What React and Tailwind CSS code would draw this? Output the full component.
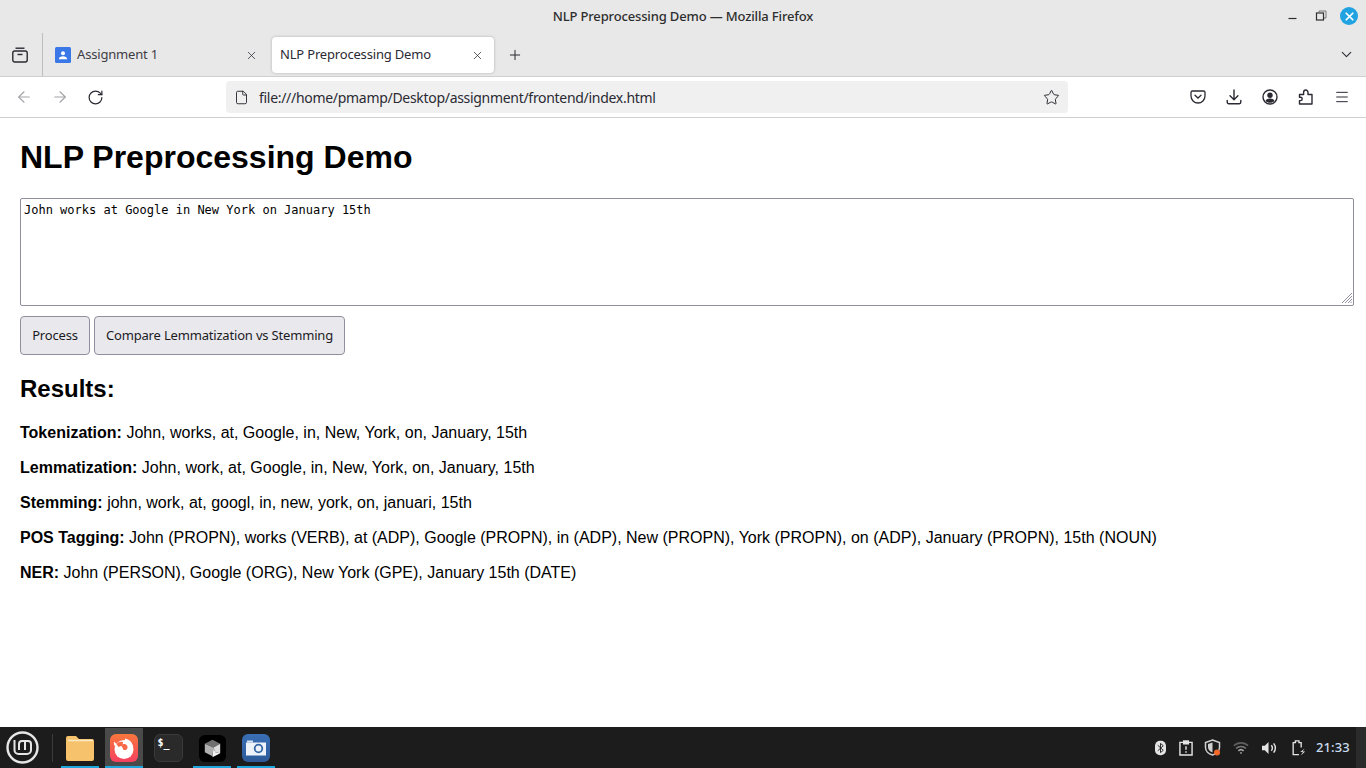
import React from 'react'
import { X, Plus, ArrowLeft, ArrowRight, RotateCw, File, Star, ChevronDown, Menu } from 'lucide-react'

const uiFont = 'font-["Noto_Sans",sans-serif]'

const results = [
  ['Tokenization:', 'John, works, at, Google, in, New, York, on, January, 15th'],
  ['Lemmatization:', 'John, work, at, Google, in, New, York, on, January, 15th'],
  ['Stemming:', 'john, work, at, googl, in, new, york, on, januari, 15th'],
  ['POS Tagging:', 'John (PROPN), works (VERB), at (ADP), Google (PROPN), in (ADP), New (PROPN), York (PROPN), on (ADP), January (PROPN), 15th (NOUN)'],
  ['NER:', 'John (PERSON), Google (ORG), New York (GPE), January 15th (DATE)'],
]

const TitleBar = () => (
  <div className="relative flex h-[33px] items-center justify-center">
    <span className={`${uiFont} text-[13px] font-medium tracking-[-0.15px] text-[#2e2e2e]`}>NLP Preprocessing Demo — Mozilla Firefox</span>
    <div className="absolute right-[8px] top-[7px] flex items-center">
      <svg width="18" height="18" viewBox="0 0 18 18" className="mr-[9px]"><path d="M3.500 11.500h8" stroke="#2e2e2e" strokeWidth="1.200" /></svg>
      <svg width="18" height="18" viewBox="0 0 18 18" className="mr-[10px]" fill="none"><path d="M7 5V4h7v7h-2" stroke="#777" /><rect x="4.500" y="6" width="7" height="7" stroke="#2e2e2e" strokeWidth="1.200" /></svg>
      <div className="flex h-[18px] w-[18px] items-center justify-center rounded-full bg-[#20a3e0]">
        <X size={13} strokeWidth={3.2} color="#fff" />
      </div>
    </div>
  </div>
)

const TabStrip = () => (
  <div className="flex h-[44px] items-stretch border-b border-[#cfcfcf]">
    <div className="flex w-[42px] items-center justify-center pr-[2px] pt-[1px]">
      <svg width="16" height="16" viewBox="0 0 16 16" fill="none" stroke="#2b2a33" strokeWidth="1.400">
        <path d="M3.500 1.200h9" />
        <rect x="0.800" y="4" width="14.400" height="11" rx="2" />
        <path d="M5.500 7.500h5" />
      </svg>
    </div>
    <div className="w-px bg-[#bdbdbd]" />
    <div className="mb-[3px] ml-[12px] flex h-[36px] w-[206px] items-center self-end">
      <svg width="16" height="16" viewBox="0 0 16 16" className="shrink-0">
        <rect width="16" height="16" rx="1.500" fill="#3b78e7" />
        <circle cx="8" cy="6.300" r="2" fill="#fff" />
        <path d="M3.800 12.200c.3-2.200 2-3 4.200-3s3.900.8 4.200 3z" fill="#fff" />
      </svg>
      <span className={`${uiFont} ml-[6px] text-[13px] tracking-[-0.18px] text-[#3d3d45]`}>Assignment 1</span>
      <X size={13} strokeWidth={1.400} color="#2b2a33" className="ml-auto mr-[3px]" />
    </div>
    <div className="mb-[3px] ml-[11px] flex h-[36px] w-[222px] items-center self-end rounded-[4px] bg-white pl-[8px] shadow-[0_0_3px_rgba(0,0,0,0.25)]">
      <span className={`${uiFont} text-[13px] tracking-[-0.18px] text-[#2b2a33]`}>NLP Preprocessing Demo</span>
      <X size={13} strokeWidth={1.400} color="#2b2a33" className="ml-auto mr-[10px]" />
    </div>
    <div className="ml-[13px] flex w-[16px] items-center justify-center pt-[1px]">
      <Plus size={16} strokeWidth={1.500} color="#2b2a33" />
    </div>
    <div className="ml-auto mr-[11px] flex items-center">
      <ChevronDown size={17} strokeWidth={1.500} color="#2b2a33" />
    </div>
  </div>
)

const NavBar = () => (
  <div className="flex h-[41px] items-center border-b border-[#cfcfcf] bg-white">
    <ArrowLeft size={18} strokeWidth={1.500} color="#a3a3a8" className="ml-[15px]" />
    <ArrowRight size={18} strokeWidth={1.500} color="#a3a3a8" className="ml-[18px]" />
    <RotateCw size={17} strokeWidth={1.700} color="#2b2a33" className="ml-[18px]" />
    <div className="ml-[122px] flex h-[32px] w-[842px] items-center rounded-[4px] bg-[#f0f0f0]">
      <File size={15} strokeWidth={1.500} color="#2b2a33" className="ml-[8px]" />
      <span className={`${uiFont} ml-[10px] text-[14px] tracking-[-0.3px] text-[#2b2a33]`}>file:///home/pmamp/Desktop/assignment/frontend/index.html</span>
      <Star size={17} strokeWidth={1.400} color="#2b2a33" className="ml-auto mr-[8px]" />
    </div>
    <div className="ml-auto mr-[16px] flex items-center gap-[20px]">
      <svg width="16" height="16" viewBox="0 0 16 16" fill="none" stroke="#2b2a33" strokeWidth="1.300">
        <path d="M2.500 2h11A1.500 1.500 0 0 1 15 3.500V7a7 7 0 0 1-14 0V3.500A1.500 1.500 0 0 1 2.500 2z" />
        <path d="M5 6.200l3 2.800 3-2.800" strokeLinecap="round" />
      </svg>
      <svg width="16" height="16" viewBox="0 0 16 16" fill="none" stroke="#2b2a33" strokeWidth="1.400" strokeLinecap="round" strokeLinejoin="round">
        <path d="M8 1v9.500M4 6.800l4 3.900 3.900-3.900M1.200 11.500v1.800a1.400 1.400 0 0 0 1.400 1.400h10.800a1.400 1.400 0 0 0 1.400-1.400v-1.800" />
      </svg>
      <svg width="16" height="16" viewBox="0 0 16 16" fill="none">
        <circle cx="8" cy="8" r="7" stroke="#2b2a33" strokeWidth="1.400" />
        <circle cx="8" cy="6.200" r="2.700" fill="#2b2a33" />
        <path d="M3.500 12c.8-1.800 2.400-2.500 4.500-2.500s3.700.7 4.500 2.500c-1.200 1.200-2.700 1.800-4.500 1.800s-3.300-.6-4.500-1.800z" fill="#2b2a33" />
      </svg>
      <svg width="16" height="16" viewBox="0 0 16 16" fill="none" stroke="#2b2a33" strokeWidth="1.400" strokeLinejoin="round">
        <path d="M1.500 15h12.500V5.500h-4V3.200a2.200 2.200 0 0 0-4.400 0v2.300H1.500v2.700h1a1.700 1.700 0 0 1 0 3.400h-1z" />
      </svg>
      <Menu size={16} strokeWidth={1.500} color="#2b2a33" />
    </div>
  </div>
)

const Page = () => (
  <div className='min-h-0 flex-1 bg-white pl-5 pr-3 pt-[21px] font-["Liberation_Sans",Arial,sans-serif] text-black'>
    <h1 className="mb-[22px] text-[32px] font-bold leading-[37px]">NLP Preprocessing Demo</h1>
    <div className="relative">
      <textarea
        readOnly
        value="John works at Google in New York on January 15th"
        className='block h-[108px] w-full resize-none rounded-[2px] border border-[#8f8f9d] px-[3px] pb-[2px] pt-[4px] font-["DejaVu_Sans_Mono",monospace] text-[12px] leading-[14px] outline-none'
      />
      <svg width="10" height="10" viewBox="0 0 10 10" className="absolute bottom-[3px] right-[2px]" stroke="#8f8f9d" strokeWidth="1">
        <path d="M0 10L10 0M3 10l7-7M6 10l4-4M8.500 10l1.500-1.500" />
      </svg>
    </div>
    <div className={`${uiFont} mt-[10px] flex gap-1 text-[13px] tracking-[-0.18px] text-[#1b1b1f]`}>
      <button className="h-[39px] w-[70px] rounded-[4px] border border-[#8f8f9d] bg-[#e9e9ed]">Process</button>
      <button className="h-[39px] w-[251px] rounded-[4px] border border-[#8f8f9d] bg-[#e9e9ed]">Compare Lemmatization vs Stemming</button>
    </div>
    <h2 className="mb-5 mt-5 text-[24px] font-bold leading-[28px]">Results:</h2>
    {results.map(([label, text]) => (
      <p key={label} className="mb-4 text-[16px] leading-[19px]">
        <strong className="font-bold">{label}</strong> {text}
      </p>
    ))}
  </div>
)

const TaskItem = ({ active, running, children }) => (
  <div className={`relative flex h-[40px] w-[38px] items-center justify-center ${active ? 'bg-[#4a4a4a]' : ''}`}>
    {children}
    {running && <div className="absolute bottom-0 left-0 h-[2px] w-full bg-[#1fa6dc]" />}
  </div>
)

const Taskbar = () => (
  <div className="flex h-[41px] items-end bg-[#1c1c1c]">
    <div className="flex h-full w-[44px] items-center justify-center">
      <svg width="33" height="33" viewBox="0 0 33 33" fill="none" stroke="#e6e6e6">
        <circle cx="16.500" cy="16.500" r="15" strokeWidth="2.400" />
        <path d="M8.500 9v10a4 4 0 0 0 4 4h8.500a4 4 0 0 0 4-4v-6a3 3 0 0 0-3-3h-6a3 3 0 0 0-3 3v6M19 10.500V19" strokeWidth="2" />
      </svg>
    </div>
    <div className="mb-[6px] ml-[8px] h-[28px] w-px bg-[#3c3c3c]" />
    <div className="ml-[8px] flex gap-[6px]">
      <TaskItem running>
        <svg width="30" height="28" viewBox="0 0 30 28">
          <path d="M1 4a2 2 0 0 1 2-2h8l3 3h13a2 2 0 0 1 2 2v18a2 2 0 0 1-2 2H3a2 2 0 0 1-2-2z" fill="#f6c36c" />
          <path d="M3 6.500h25" stroke="#fbe9c5" strokeWidth="1.500" />
        </svg>
      </TaskItem>
      <TaskItem active running>
        <svg width="30" height="30" viewBox="0 0 30 30">
          <defs>
            <linearGradient id="ff" x1="0" y1="0" x2="0" y2="1">
              <stop offset="0" stopColor="#f9783c" />
              <stop offset="1" stopColor="#f5405f" />
            </linearGradient>
          </defs>
          <rect x="1" y="1" width="28" height="28" rx="6" fill="url(#ff)" />
          <circle cx="15" cy="16.500" r="9.500" fill="#fff" />
          <path d="M16 5.500c4 .8 7.500 4 8.200 8.500l-8.200-2z" fill="#fff" />
          <path d="M5 8.500c.8 1 1.500 1.800 2.500 2.300L6 13.500C5 12 4.700 10 5 8.500z" fill="#fff" />
          <path d="M9 9.500c1.500-.8 3.500-1 5-.5l-.5 3.500-4 1.500L7.500 11z" fill="#f8694a" />
          <path d="M12 12.500c1-1.200 3-1.800 4.500-1.200 1.800.7 2.500 2.700 1.800 4.200-.7 1.400-2.500 2-4 1.200-.3-1-1-2.500-2.300-4.200z" fill="#f8694a" />
        </svg>
      </TaskItem>
      <TaskItem>
        <div className='relative h-[28px] w-[29px] rounded-[6px] border border-[#3a3a3a] bg-[#2a2a2a] font-["DejaVu_Sans_Mono",monospace] text-[10px] font-bold leading-none text-white'>
          <span className="absolute left-[3px] top-[3px]">$</span>
          <span className="absolute left-[9px] top-[4px]">_</span>
        </div>
      </TaskItem>
      <TaskItem running>
        <svg width="27" height="27" viewBox="0 0 28 28">
          <rect width="28" height="28" rx="6" fill="#000" />
          <path d="M14 5l8 4-7 4-9-4z" fill="#707070" />
          <path d="M6 9l9 4-1 9-8-4z" fill="#b0b0b0" />
          <path d="M22 9l-7 4 2 5 5 1z" fill="#dcdcdc" />
          <path d="M15 13l2 5 5 1-8 4z" fill="#f2f2f2" />
        </svg>
      </TaskItem>
      <TaskItem running>
        <svg width="30" height="30" viewBox="0 0 30 30">
          <defs>
            <linearGradient id="cam" x1="0" y1="0" x2="0" y2="1">
              <stop offset="0" stopColor="#3a6fb5" />
              <stop offset="1" stopColor="#2d5a98" />
            </linearGradient>
          </defs>
          <rect x="1" y="1" width="28" height="28" rx="6" fill="url(#cam)" />
          <path d="M5 9.500h20v13H5z" fill="#eef3fa" />
          <rect x="6" y="7.500" width="6" height="2" fill="#d5e3f5" />
          <circle cx="17.500" cy="15.500" r="3.800" fill="#eef3fa" stroke="#3466a5" strokeWidth="1.800" />
        </svg>
      </TaskItem>
    </div>
    <div className="ml-auto flex h-full items-center">
      <svg width="11" height="16" viewBox="0 0 12 16"><rect width="12" height="16" rx="5.500" fill="#e5e5e5" /><path d="M3 5l6 5.500L6 13V3l3 2.500L3 11" fill="none" stroke="#1c1c1c" /></svg>
      <svg width="14" height="16" viewBox="0 0 15 17" className="ml-[13px]" fill="none" stroke="#e5e5e5" strokeWidth="1.500"><path d="M4.500 2.500H1v13.500h13V2.500h-3.500" /><rect x="5" y="1" width="5" height="3" fill="#e5e5e5" /><path d="M7.500 6.500v4M7.500 12v1.500" /></svg>
      <svg width="17" height="17" viewBox="0 0 16 17" className="ml-[11px]"><path d="M8 1l7 2.500v5c0 3.500-3 6.500-7 7.500-4-1-7-4-7-7.500v-5z" fill="none" stroke="#d0d0d0" strokeWidth="1.500" /><path d="M8 3.500v10C5 12.500 3.500 10.500 3.500 8V5z" fill="#d0d0d0" /><circle cx="12.500" cy="13.500" r="3" fill="#f26a2a" /></svg>
      <svg width="16" height="14" viewBox="0 0 18 14" className="ml-[12px]" fill="none" strokeWidth="1.800"><path d="M1 4.500c4.500-4.400 11.500-4.400 16 0" stroke="#5f5f5f" /><path d="M3.500 7.500c3-3 8-3 11 0" stroke="#7a7a7a" /><path d="M6 10.200c1.700-1.600 4.300-1.600 6 0" stroke="#a8a8a8" /><circle cx="9" cy="12.500" r="1" fill="#a8a8a8" /></svg>
      <svg width="16" height="14" viewBox="0 0 17 15" className="ml-[12px]"><path d="M1 5h3l4-4v13l-4-4H1z" fill="#e5e5e5" /><path d="M11 4.500c1.300 1.700 1.300 4.300 0 6M13.500 2.500c2.200 3 2.200 7 0 10" fill="none" stroke="#e5e5e5" strokeWidth="1.500" /></svg>
      <svg width="15" height="16" viewBox="0 0 15 18" className="ml-[14px]" fill="none"><path d="M8 16.500H1.500V3H4V1h4v2h2.500v5.500" stroke="#e5e5e5" strokeWidth="1.500" /><path d="M14.500 9.500l-5 4h3l-2.500 4 5-4.500h-3z" fill="#e5e5e5" /></svg>
      <span className={`${uiFont} ml-[10px] w-[35px] whitespace-nowrap text-[13px] font-medium tracking-[0.1px] text-[#c8dcf0]`}>21:33</span>
      <div className="ml-[5px] h-full w-[10px] bg-[#2b2b2b]" />
    </div>
  </div>
)

export default function App() {
  return (
    <div className="flex h-screen w-full flex-col overflow-hidden bg-white">
      <div className="bg-[#e8e8e8]">
        <TitleBar />
        <TabStrip />
      </div>
      <NavBar />
      <Page />
      <Taskbar />
    </div>
  )
}
